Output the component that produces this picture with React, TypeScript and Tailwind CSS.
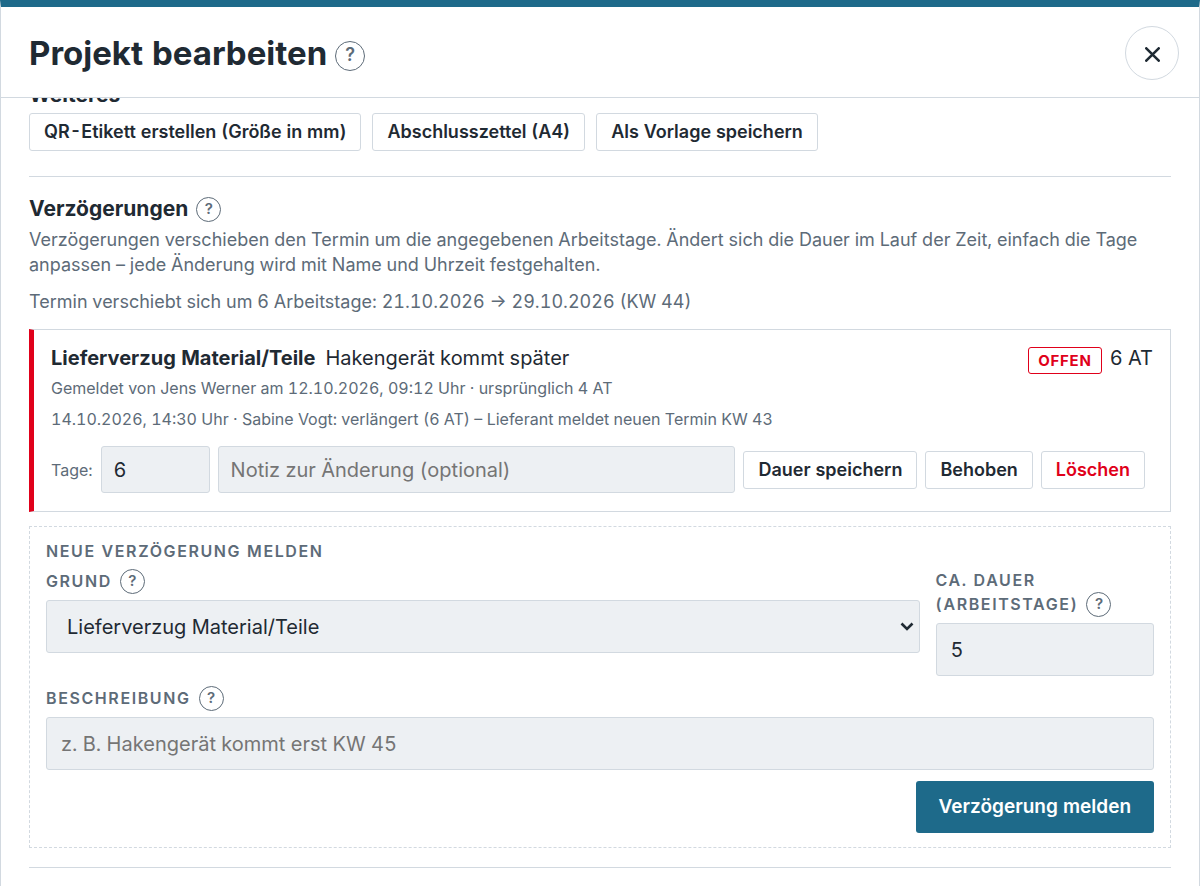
import { useState } from "react";
import type { ReactNode } from "react";

const smallButton =
  "h-[38px] shrink-0 rounded-[3px] border border-[#d2d9e0] bg-white px-3.5 text-[18px] leading-6 font-semibold whitespace-nowrap";
const field =
  "w-full min-w-0 rounded-[3px] border border-[#d2d9e0] bg-[#edf0f3] text-[20px] text-[#1f2a33] placeholder:text-[#757575]";
const caption = "text-[16px] leading-6 font-semibold tracking-widest text-[#5d6b78] uppercase";

function Help({ topic, large = false }: { topic: string; large?: boolean }) {
  return (
    <button
      type="button"
      aria-label={`Hilfe: ${topic}`}
      className={`flex shrink-0 items-center justify-center rounded-full border-[1.5px] border-[#5d6b78] font-semibold tracking-normal text-[#5d6b78] ${
        large ? "size-[30px] pb-1 text-[18px]" : "size-[25px] text-[15px]"
      }`}
    >
      ?
    </button>
  );
}

function Caption({ id, topic, children }: { id: string; topic: string; children: ReactNode }) {
  return (
    <div className="flex items-end gap-2">
      <label htmlFor={id} className={`${caption} w-min pb-px`}>
        {children}
      </label>
      <Help topic={topic} />
    </div>
  );
}

export default function App() {
  const [days, setDays] = useState("6");
  const [duration, setDuration] = useState("5");

  return (
    <main
      role="dialog"
      aria-labelledby="dialog-title"
      className="flex h-screen flex-col overflow-hidden border-x border-t-[7px] border-x-[#d2d9e0] border-t-[#1e6a8a] bg-white font-['Inter','Liberation_Sans',sans-serif] text-[#1f2a33] tabular-nums"
    >
      <header className="flex shrink-0 items-center justify-between border-b border-[#d2d9e0] pt-[19px] pr-5 pb-[17px] pl-7">
        <div className="flex items-end gap-2">
          <h1 id="dialog-title" className="text-[33px] leading-9 font-bold">
            Projekt bearbeiten
          </h1>
          <Help topic="Projekt bearbeiten" large />
        </div>
        <button
          type="button"
          aria-label="Schließen"
          className="flex size-[54px] items-center justify-center rounded-full border border-[#d2d9e0] pt-0.5"
        >
          <svg viewBox="0 0 14 14" className="size-[15px]" fill="none" stroke="currentColor" strokeWidth="2.4" strokeLinecap="round" aria-hidden="true">
            <path d="M1.2 1.2l11.6 11.6M12.8 1.2L1.2 12.8" />
          </svg>
        </button>
      </header>

      <div className="min-h-0 flex-1 overflow-hidden px-7">
        <section className="border-b border-[#d2d9e0] pb-[25px]">
          <h2 className="-mt-[17px] pb-1 text-[21px] leading-7 font-bold">Weiteres</h2>
          <div className="flex flex-wrap gap-[11px]">
            <button type="button" className={smallButton}>QR-Etikett erstellen (Größe in mm)</button>
            <button type="button" className={smallButton}>Abschlusszettel (A4)</button>
            <button type="button" className={smallButton}>Als Vorlage speichern</button>
          </div>
        </section>

        <section className="border-b border-[#d2d9e0] pt-5 pb-[19px]">
          <div className="flex items-start gap-2">
            <h2 className="text-[21px] leading-6 font-bold">Verzögerungen</h2>
            <Help topic="Verzögerungen" />
          </div>
          <p className="mt-[5px] text-[18px] leading-[25px] text-[#5d6b78]">
            Verzögerungen verschieben den Termin um die angegebenen Arbeitstage. Ändert sich die Dauer im Lauf der Zeit,
            einfach die Tage anpassen – jede Änderung wird mit Name und Uhrzeit festgehalten.
          </p>
          <p className="mt-3 text-[18px] leading-[25px] text-[#5d6b78]">
            Termin verschiebt sich um 6 Arbeitstage: 21.10.2026 → 29.10.2026 (KW 44)
          </p>

          <article className="mt-[15px] border border-l-[5px] border-[#d2d9e0] border-l-[#e0001a] pt-4 pr-[17px] pb-[18px] pl-[17px]">
            <div className="flex min-h-[30px] items-start justify-between">
              <h3 className="text-[20px] leading-6">
                <strong className="mr-2.5 font-bold">Lieferverzug Material/Teile</strong>
                Hakengerät kommt später
              </h3>
              <div className="flex items-start gap-2 text-[20px] leading-6">
                <span className="mt-px rounded-[3px] border-[1.5px] border-[#e0001a] px-[9px] text-[15px] leading-[25px] font-bold tracking-wider text-[#e0001a]">
                  OFFEN
                </span>
                <span>6 AT</span>
              </div>
            </div>
            <p className="text-[16px] leading-6 text-[#5d6b78]">
              Gemeldet von Jens Werner am 12.10.2026, 09:12 Uhr · ursprünglich 4 AT
            </p>
            <p className="mt-[7px] text-[16px] leading-6 text-[#5d6b78]">
              14.10.2026, 14:30 Uhr · Sabine Vogt: verlängert (6 AT) – Lieferant meldet neuen Termin KW 43
            </p>
            <div className="mt-[15px] flex items-center gap-2 pr-2">
              <label htmlFor="days" className="text-[16px] text-[#5d6b78]">
                Tage:
              </label>
              <div className="w-[109px] shrink-0">
                <input id="days" value={days} onChange={(e) => setDays(e.target.value)} inputMode="numeric" className={`${field} block h-[47px] px-3`} />
              </div>
              <input aria-label="Notiz zur Änderung" placeholder="Notiz zur Änderung (optional)" className={`${field} h-[47px] flex-1 px-3`} />
              <button type="button" className={smallButton}>Dauer speichern</button>
              <button type="button" className={smallButton}>Behoben</button>
              <button type="button" className={`${smallButton} text-[#e0001a]`}>Löschen</button>
            </div>
          </article>

          <form onSubmit={(e) => e.preventDefault()} className="mt-3.5 border border-dashed border-[#d2d9e0] px-4 pt-3 pb-3.5">
            <h3 className={caption}>Neue Verzögerung melden</h3>
            <div className="mt-[5px] grid grid-cols-[4fr_1fr] items-start gap-4">
              <div className="flex flex-col gap-1.5 pt-px">
                <Caption id="reason" topic="Grund">Grund</Caption>
                <div className="relative">
                  <select id="reason" className={`${field} block h-[53px] appearance-none px-5`}>
                    <option>Lieferverzug Material/Teile</option>
                  </select>
                  <svg viewBox="0 0 14 10" className="pointer-events-none absolute top-[22px] right-1.5 h-2.5 w-3.5" fill="none" stroke="currentColor" strokeWidth="2.6" aria-hidden="true">
                    <path d="M1.5 1.5L7 7l5.5-5.5" />
                  </svg>
                </div>
              </div>
              <div className="flex flex-col gap-1.5">
                <Caption id="duration" topic="Ca. Dauer">
                  Ca.&nbsp;Dauer (Arbeitstage)
                </Caption>
                <input id="duration" value={duration} onChange={(e) => setDuration(e.target.value)} inputMode="numeric" className={`${field} h-[53px] px-3.5`} />
              </div>
            </div>
            <div className="mt-2.5 flex flex-col gap-1.5">
              <Caption id="description" topic="Beschreibung">Beschreibung</Caption>
              <input id="description" placeholder="z. B. Hakengerät kommt erst KW 45" className={`${field} h-[53px] px-3.5`} />
            </div>
            <div className="mt-[11px] flex justify-end">
              <button type="submit" className="h-[52px] rounded-[3px] bg-[#1e6a8a] px-[23px] text-[19px] font-semibold text-white">
                Verzögerung melden
              </button>
            </div>
          </form>
        </section>
      </div>
    </main>
  );
}
